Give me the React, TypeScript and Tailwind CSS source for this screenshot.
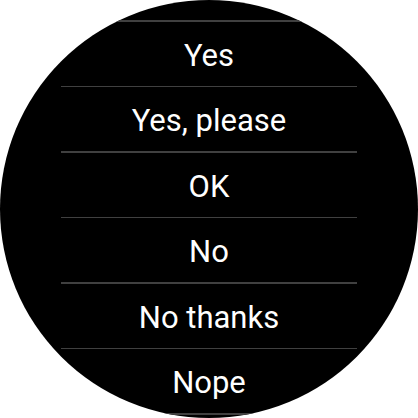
const options = ["Yes", "Yes, please", "OK", "No", "No thanks", "Nope"];

export default function App() {
  return (
    <div className="h-[418px] w-[418px] bg-white">
      <div className="h-[418px] w-[418px] overflow-hidden rounded-full bg-black pt-[20px] font-['Roboto',sans-serif] text-white">
        <ul className="flex flex-col items-center">
          {options.map((label) => (
            <li key={label} className="flex w-[296px] flex-col">
              <div className="h-[1.5px] bg-[#404040]" />
              <div className="flex h-[64px] items-center justify-center pt-[3px] text-[31px] leading-none">{label}</div>
            </li>
          ))}
          <li className="w-[296px]">
            <div className="h-[1.5px] bg-[#404040]" />
          </li>
        </ul>
      </div>
    </div>
  );
}
